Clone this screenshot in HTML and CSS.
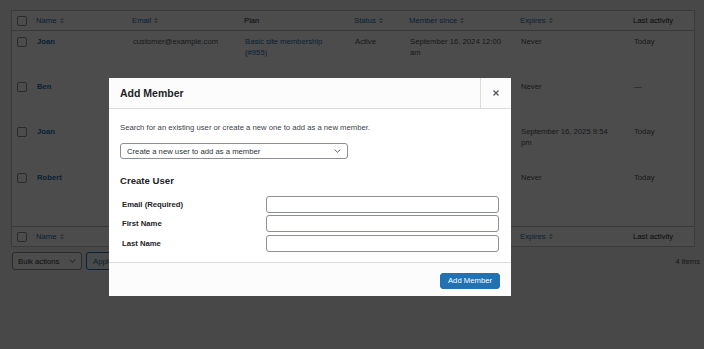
FILE: index.html
```html
<!DOCTYPE html>
<html lang="en">
<head>
<meta charset="utf-8">
<title>Members</title>
<link rel="stylesheet" href="styles.css">
</head>
<body>
<div class="wrap">
  <table class="members">
    <colgroup>
      <col class="c-cb"><col class="c-name"><col class="c-email"><col class="c-plan"><col class="c-status"><col class="c-since"><col class="c-exp"><col class="c-last">
    </colgroup>
    <thead>
      <tr>
        <td class="cb"><span class="check"></span></td>
        <th><a class="sort">Name<svg class="sorticon" width="4" height="7" viewBox="0 0 4 7"><path d="M0 3L2 0.5L4 3Z M0 4L2 6.5L4 4Z"/></svg></a></th>
        <th><a class="sort">Email<svg class="sorticon" width="4" height="7" viewBox="0 0 4 7"><path d="M0 3L2 0.5L4 3Z M0 4L2 6.5L4 4Z"/></svg></a></th>
        <th>Plan</th>
        <th><a class="sort">Status<svg class="sorticon" width="4" height="7" viewBox="0 0 4 7"><path d="M0 3L2 0.5L4 3Z M0 4L2 6.5L4 4Z"/></svg></a></th>
        <th><a class="sort">Member since<svg class="sorticon" width="4" height="7" viewBox="0 0 4 7"><path d="M0 3L2 0.5L4 3Z M0 4L2 6.5L4 4Z"/></svg></a></th>
        <th><a class="sort">Expires<svg class="sorticon" width="4" height="7" viewBox="0 0 4 7"><path d="M0 3L2 0.5L4 3Z M0 4L2 6.5L4 4Z"/></svg></a></th>
        <th>Last activity</th>
      </tr>
    </thead>
    <tbody>
      <tr class="row">
        <td class="cb"><span class="check"></span></td>
        <td><strong class="user">Joan</strong></td>
        <td>customer@example.com</td>
        <td><a class="link">Basic site membership (#955)</a></td>
        <td>Active</td>
        <td>September 16, 2024 12:00 am</td>
        <td>Never</td>
        <td>Today</td>
      </tr>
      <tr class="row">
        <td class="cb"><span class="check"></span></td>
        <td><strong class="user">Ben</strong></td>
        <td></td>
        <td></td>
        <td></td>
        <td></td>
        <td>Never</td>
        <td>—</td>
      </tr>
      <tr class="row row-c">
        <td class="cb"><span class="check"></span></td>
        <td><strong class="user">Joan</strong></td>
        <td></td>
        <td></td>
        <td></td>
        <td></td>
        <td>September 16, 2025 9:54 pm</td>
        <td>Today</td>
      </tr>
      <tr class="row row-last">
        <td class="cb"><span class="check"></span></td>
        <td><strong class="user">Robert</strong></td>
        <td></td>
        <td></td>
        <td></td>
        <td></td>
        <td>Never</td>
        <td>Today</td>
      </tr>
    </tbody>
    <tfoot>
      <tr>
        <td class="cb"><span class="check"></span></td>
        <th><a class="sort">Name<svg class="sorticon" width="4" height="7" viewBox="0 0 4 7"><path d="M0 3L2 0.5L4 3Z M0 4L2 6.5L4 4Z"/></svg></a></th>
        <th></th>
        <th></th>
        <th></th>
        <th></th>
        <th><a class="sort">Expires<svg class="sorticon" width="4" height="7" viewBox="0 0 4 7"><path d="M0 3L2 0.5L4 3Z M0 4L2 6.5L4 4Z"/></svg></a></th>
        <th>Last activity</th>
      </tr>
    </tfoot>
  </table>

  <div class="tablenav">
    <div class="bulk">
      <div class="select bulk-select"><span>Bulk actions</span><svg class="chev" width="7" height="4" viewBox="0 0 7 4"><polyline points="0.6,0.5 3.5,3.3 6.4,0.5"/></svg></div>
      <button class="apply">Apply</button>
    </div>
    <div class="count">4 items</div>
  </div>
</div>

<div class="overlay"></div>

<div class="modal">
  <div class="modal-head">
    <h1 class="modal-title">Add Member</h1>
    <button class="close" aria-label="Close"><svg width="6" height="6" viewBox="0 0 6 6"><path d="M0.5 0.5L5.5 5.5M5.5 0.5L0.5 5.5"/></svg></button>
  </div>
  <div class="modal-body">
    <p class="intro">Search for an existing user or create a new one to add as a new member.</p>
    <div class="select wide-select"><span>Create a new user to add as a member</span><svg class="chev" width="7" height="4" viewBox="0 0 7 4"><polyline points="0.6,0.5 3.5,3.3 6.4,0.5"/></svg></div>
    <h2 class="section">Create User</h2>
    <div class="form">
      <label class="lbl">Email (Required)</label><input class="field" type="text">
      <label class="lbl">First Name</label><input class="field" type="text">
      <label class="lbl">Last Name</label><input class="field" type="text">
    </div>
  </div>
  <div class="modal-foot">
    <button class="primary">Add Member</button>
  </div>
</div>
</body>
</html>
```

FILE: styles.css
```css
* { box-sizing: border-box; }
html, body { margin: 0; padding: 0; }
body {
  width: 704px;
  height: 349px;
  overflow: hidden;
  background: #f0f0f1;
  font-family: "Liberation Sans", Arial, sans-serif;
  font-size: 7.7px;
  line-height: 11px;
  color: #50575e;
}
.wrap { padding: 10px 4px 0 11px; }

.members {
  width: 684px;
  table-layout: fixed;
  border-collapse: separate;
  border-spacing: 0;
  border: 1px solid #c3c4c7;
  background: #fff;
}
.c-cb { width: 20px; }
.c-name { width: 96px; }
.c-email { width: 112px; }
.c-plan { width: 110px; }
.c-status { width: 55px; }
.c-since { width: 111px; }
.c-exp { width: 113px; }
.c-last { width: 65px; }

.members th, .members td {
  text-align: left;
  vertical-align: top;
  font-weight: normal;
  padding: 4.5px 11px 0 5px;
}
.members thead th, .members thead td,
.members tfoot th, .members tfoot td {
  padding: 4px 8px 4px 4px;
  color: #1d2327;
}
.members thead th, .members thead td { border-bottom: 1px solid #c3c4c7; }
.members tfoot th, .members tfoot td { border-top: 1px solid #c3c4c7; }
.members .cb { padding-left: 5px; padding-right: 0; }

.row { height: 45px; }
.row-c { height: 46px; }
.row-last { height: 59px; }

.check {
  display: block;
  width: 10px;
  height: 10px;
  margin-top: 1px;
  border: 1px solid #8c8f94;
  border-radius: 2px;
  background: #fff;
}
.sort { color: #2271b1; display: inline-flex; align-items: center; }
.sorticon { margin-left: 3px; fill: #a7aaad; }
.user { color: #2271b1; font-weight: bold; }
.link { color: #2271b1; }

.tablenav {
  display: flex;
  justify-content: space-between;
  align-items: center;
  margin-top: 5px;
  height: 18px;
}
.bulk { display: flex; gap: 4px; }
.select {
  display: flex;
  align-items: center;
  justify-content: space-between;
  border: 1px solid #8c8f94;
  border-radius: 3px;
  background: #fff;
  color: #2c3338;
}
.bulk-select { width: 70px; height: 18px; padding: 0 5px 0 5px; margin-left: 1px; }
.chev { fill: none; stroke: #50575e; stroke-width: 0.9; }
.apply {
  height: 18px;
  padding: 0 6px;
  border: 1px solid #2271b1;
  border-radius: 3px;
  background: #f6f7f7;
  color: #2271b1;
  font: inherit;
}
.count { color: #50575e; }

.overlay {
  position: fixed;
  inset: 0;
  background: rgba(0, 0, 0, 0.7);
}

.modal {
  position: absolute;
  left: 109px;
  top: 78px;
  width: 402px;
  height: 218px;
  background: #fff;
  display: flex;
  flex-direction: column;
  color: #3c434a;
}
.modal-head {
  display: flex;
  height: 31px;
  background: #fcfcfc;
  border-bottom: 1px solid #dcdcde;
}
.modal-title {
  flex: 1;
  margin: 0;
  padding-left: 11px;
  font-size: 10.5px;
  line-height: 30px;
  font-weight: bold;
  color: #1d2327;
}
.close {
  width: 31px;
  height: 30px;
  border: 0;
  border-left: 1px solid #dcdcde;
  background: transparent;
  padding: 0;
  display: flex;
  align-items: center;
  justify-content: center;
}
.close svg { stroke: #50575e; stroke-width: 1.3; }

.modal-body { padding: 12.5px 11px 10px 11px; }
.intro { margin: 0; color: #3c434a; }
.wide-select {
  width: 228px;
  height: 16px;
  margin-top: 10.5px;
  padding: 0 6px;
}
.section {
  margin: 14.5px 0 9.5px;
  font-size: 9.6px;
  line-height: 13px;
  font-weight: bold;
  color: #1d2327;
}
.form {
  display: grid;
  grid-template-columns: 146px 233px;
  row-gap: 2.4px;
  align-items: center;
}
.lbl { padding-left: 2px; font-weight: bold; color: #1d2327; }
.field {
  height: 17px;
  width: 233px;
  border: 1px solid #8c8f94;
  border-radius: 3px;
  background: #fff;
  margin: 0;
}

.modal-foot {
  flex: 1;
  border-top: 1px solid #dcdcde;
  background: #fcfcfc;
  display: flex;
  justify-content: flex-end;
  align-items: flex-start;
  padding: 10px 11px 0;
}
.primary {
  height: 16px;
  padding: 0 7px;
  border: 1px solid #2271b1;
  border-radius: 3px;
  background: #2271b1;
  color: #fff;
  font: inherit;
  line-height: 14px;
}
```
